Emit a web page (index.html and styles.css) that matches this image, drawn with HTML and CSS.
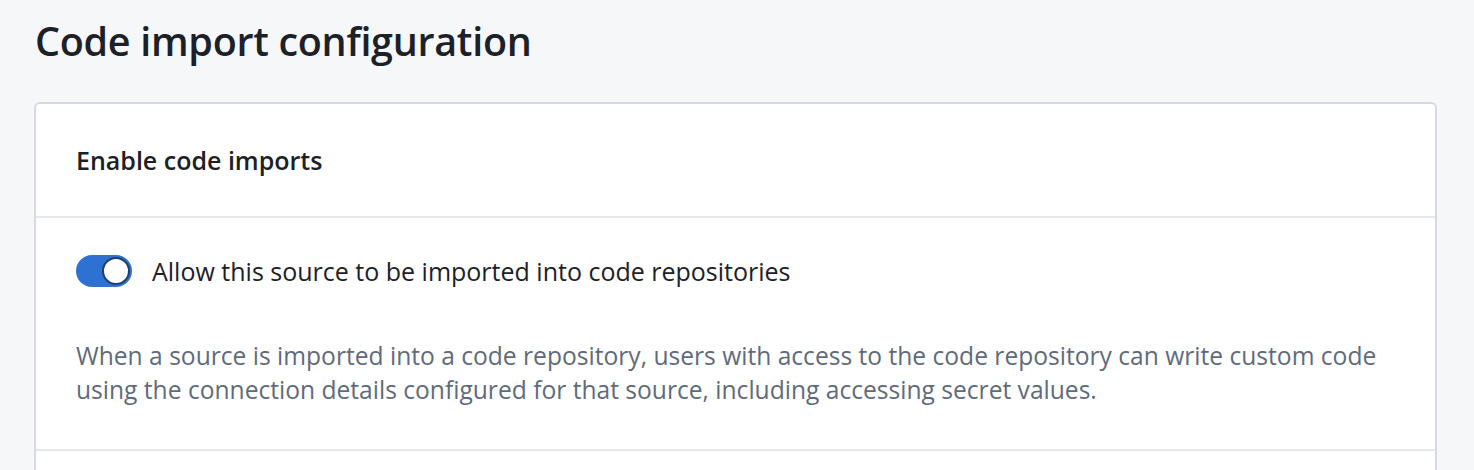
FILE: index.html
```html
<!DOCTYPE html>
<html lang="en">
<head>
<meta charset="utf-8">
<title>Code import configuration</title>
<link rel="stylesheet" href="styles.css">
</head>
<body>
<main class="page">
  <h1 class="page-title">Code import configuration</h1>
  <section class="card">
    <header class="card-header">
      <h2 class="card-title">Enable code imports</h2>
    </header>
    <div class="card-body">
      <label class="switch-row">
        <span class="switch"><span class="switch-knob"></span></span>
        <span class="switch-label">Allow this source to be imported into code repositories</span>
      </label>
      <p class="description">When a source is imported into a code repository, users with access to the code repository can write custom code using the connection details configured for that source, including accessing secret values.</p>
    </div>
    <div class="card-footer"></div>
  </section>
</main>
</body>
</html>
```

FILE: styles.css
```css
html, body {
  margin: 0;
  padding: 0;
  background: #f6f7f9;
  height: 100%;
  overflow: hidden;
}

body {
  font-family: "Open Sans", "Noto Sans", "Liberation Sans", sans-serif;
  color: #1c2127;
}

.page {
  padding: 15px 37px 0 34px;
}

.page-title {
  margin: 0 0 0 1px;
  font-size: 39.5px;
  line-height: 52px;
  font-weight: 600;
  letter-spacing: -0.3px;
  color: #1c2127;
}

.card {
  margin-top: 35px;
  background: #ffffff;
  border: 2px solid #d6d9dd;
  border-bottom: none;
  border-radius: 6px 6px 0 0;
}

.card-header {
  height: 112px;
  display: flex;
  align-items: center;
  padding: 0 40px;
  border-bottom: 2px solid #e5e7ea;
}

.card-title {
  margin: 0;
  font-size: 25px;
  font-weight: 600;
  color: #1c2127;
}

.card-body {
  padding: 36px 36px 42px 40px;
  border-bottom: 2px solid #e5e7ea;
}

.switch-row {
  display: flex;
  align-items: center;
  gap: 20px;
  height: 34px;
}

.switch {
  width: 56px;
  height: 32px;
  border-radius: 16px;
  background: #2d72d2;
  display: flex;
  align-items: center;
  justify-content: flex-end;
  padding: 0 2px;
  box-sizing: border-box;
}

.switch-knob {
  width: 28px;
  height: 28px;
  border-radius: 50%;
  background: #ffffff;
  box-sizing: border-box;
  border: 2px solid #1f3f6e;
}

.switch-label {
  font-size: 25px;
  color: #1c2127;
}

.description {
  margin: 51px 0 0;
  font-size: 24.6px;
  line-height: 34px;
  color: #5f6b7c;
}

.card-footer {
  height: 20px;
}
```
